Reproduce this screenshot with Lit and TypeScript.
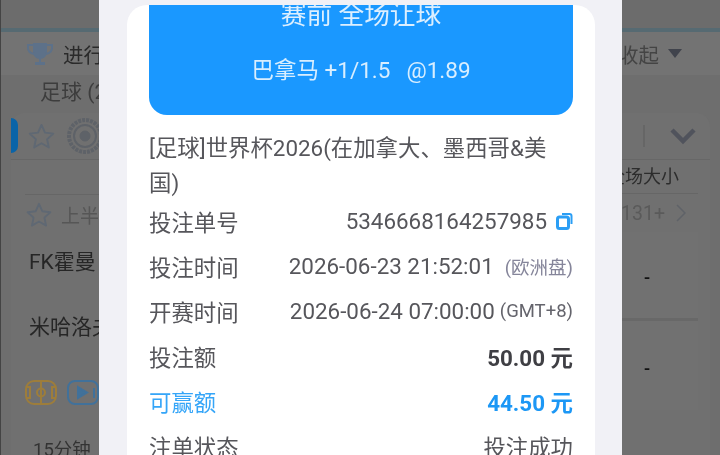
import { LitElement, html, css } from "lit";
import { customElement } from "lit/decorators.js";

const star = html`<svg viewBox="0 0 30 30" fill="none" stroke="#5f6873" stroke-width="2" stroke-linejoin="round">
  <path d="M15 3l3.6 8 8.6 1-6.4 5.8 1.8 8.6L15 22l-7.6 4.4 1.8-8.6L2.8 12l8.6-1z" />
</svg>`;

@customElement("app-root")
export class AppRoot extends LitElement {
  static styles = css`
    :host {
      display: block;
      position: relative;
      width: 720px;
      height: 455px;
      overflow: hidden;
      background: #6e6e6e;
      font-family: Roboto, "Noto Sans CJK SC", sans-serif;
      filter: blur(0.6px);
    }

    /* dimmed page behind the dialog */
    .page {
      height: 455px;
      box-sizing: border-box;
      border-left: 1px solid #444;
      display: flex;
      flex-direction: column;
      color: #222;
    }
    .strip {
      height: 28px;
      background: #6c6c6c;
      flex: none;
    }
    .rule {
      height: 4px;
      background: #566a72;
      flex: none;
    }
    .head {
      height: 43px;
      flex: none;
      background: #737373;
      display: flex;
      align-items: center;
      justify-content: space-between;
      padding: 0 38px 0 25px;
      font-size: 20.5px;
      color: #2a2a2a;
    }
    .head-l,
    .head-r {
      display: flex;
      align-items: center;
      gap: 9px;
    }
    .head-r {
      color: #444;
    }
    .tri {
      width: 0;
      height: 0;
      border-left: 7px solid transparent;
      border-right: 7px solid transparent;
      border-top: 9px solid #40434c;
    }
    .sport {
      height: 38px;
      flex: none;
      padding-left: 39px;
      font-size: 21px;
      line-height: 35px;
      color: #3d3d3d;
    }
    .card {
      flex: 1;
      margin: 0 10px;
      background: #707070;
      border-radius: 14px 14px 0 0;
      display: flex;
      flex-direction: column;
    }
    .card-top {
      height: 46px;
      flex: none;
      display: flex;
      align-items: center;
      border-bottom: 1px solid #676767;
      position: relative;
      justify-content: space-between;
      padding: 0 14px 0 16px;
    }
    .accent {
      position: absolute;
      left: 0;
      top: 5px;
      width: 7px;
      height: 35px;
      background: #0a64a8;
      border-radius: 0 8px 8px 0;
    }
    .card-top-l,
    .card-top-r {
      display: flex;
      align-items: center;
      gap: 10px;
    }
    .card-top-r {
      gap: 25px;
    }
    .sep {
      width: 2px;
      height: 22px;
      background: #666;
    }
    .star {
      width: 29px;
      height: 29px;
      display: block;
      flex: none;
    }
    .chev {
      width: 26px;
      height: 18px;
      display: block;
    }
    .market {
      flex: 1;
      display: flex;
      justify-content: space-between;
      padding: 0 12px 0 14px;
    }
    .teams {
      display: flex;
      flex-direction: column;
      width: 80px;
    }
    .half {
      height: 40px;
      margin-top: 34px;
      flex: none;
      box-sizing: border-box;
      border-top: 1px solid #666;
      display: flex;
      align-items: center;
      gap: 8px;
      font-size: 19px;
      color: #565656;
      white-space: nowrap;
    }
    .half .star {
      width: 28px;
      height: 28px;
    }
    .team {
      height: 65px;
      flex: none;
      box-sizing: border-box;
      padding: 12px 0 0 4px;
      font-size: 21px;
      line-height: 32px;
      white-space: nowrap;
      color: #262626;
    }
    .icons {
      display: flex;
      gap: 10px;
      margin-top: 16px;
      height: 58px;
      flex: none;
    }
    .icons svg {
      display: block;
      width: 32px;
      height: 25px;
    }
    .time {
      font-size: 18.5px;
      padding-left: 8px;
      color: #333;
      line-height: 24px;
      white-space: nowrap;
    }
    .odds {
      width: 102px;
      display: flex;
      flex-direction: column;
    }
    .odds-title {
      height: 33px;
      font-size: 18px;
      line-height: 34px;
      color: #2c2c2c;
      white-space: nowrap;
      text-align: center;
      padding-right: 8px;
    }
    .more {
      height: 38px;
      flex: none;
      border-top: 1px solid #666;
      display: flex;
      align-items: center;
      gap: 11px;
      font-size: 19.5px;
      color: #5a5a5a;
      justify-content: flex-end;
      padding-right: 12px;
    }
    .cell {
      height: 89px;
      flex: none;
      display: flex;
      align-items: center;
      justify-content: center;
      box-sizing: border-box;
      padding-top: 5px;
      background: #717171;
      border-bottom: 3px solid #686868;
      font-size: 18px;
      font-weight: 500;
      color: #111;
    }
    .cell:last-child {
      border-bottom: none;
    }

    /* dialog */
    .modal {
      position: absolute;
      left: 99px;
      top: 0;
      width: 523px;
      height: 455px;
      box-sizing: border-box;
      background: #f1f1f6;
      padding: 5px 27px 0 28px;
    }
    .sheet {
      height: 100%;
      background: #fff;
      border-radius: 20px 20px 0 0;
      padding: 0 22px;
      overflow: hidden;
      color: #56565b;
      font-size: 22.4px;
    }
    .banner {
      height: 110px;
      background: #1a98ff;
      border-radius: 0 0 18px 18px;
      color: #d8eeff;
      text-align: center;
      box-sizing: border-box;
    }
    .banner-title {
      font-size: 25.7px;
      line-height: 20px;
      color: #dcefff;
    }
    .banner-pick {
      font-size: 22.5px;
      line-height: 30px;
      margin-top: 30px;
    }
    .banner-pick span {
      margin-left: 16px;
    }
    .league {
      margin: 16px 0 -3px;
      line-height: 35px;
      padding-right: 16px;
    }
    .row {
      height: 45px;
      display: flex;
      align-items: center;
      justify-content: space-between;
    }
    .val {
      display: flex;
      align-items: center;
    }
    .note {
      font-size: 18.5px;
      color: #85859a;
      margin-left: 11px;
    }
    .note.dark {
      color: #64646c;
      margin-left: 5px;
    }
    .copy {
      width: 17px;
      height: 18px;
      margin-left: 9px;
      display: block;
    }
    .bold {
      font-weight: 700;
      color: #3f3f44;
    }
    .win {
      color: #35a5f8;
    }
    .win .bold {
      color: #1c97f5;
    }
  `;

  render() {
    return html`
      <div class="page">
        <div class="strip"></div>
        <div class="rule"></div>
        <div class="head">
          <div class="head-l">
            <svg width="28" height="28" viewBox="0 0 28 28">
              <path d="M7 3h14v9c0 4-3 7-7 7s-7-3-7-7z" fill="#5d7189" />
              <path d="M7 5H2v3c0 3 2 5 6 6M21 5h5v3c0 3-2 5-6 6" fill="none" stroke="#5d7189" stroke-width="2" />
              <path d="M13 18h2v4h4v3H9v-3h4z" fill="#5d7189" />
            </svg>
            <span>进行中</span>
          </div>
          <div class="head-r"><span>收起</span><i class="tri"></i></div>
        </div>
        <div class="sport">足球 (2)</div>
        <div class="card">
          <div class="card-top">
            <i class="accent"></i>
            <div class="card-top-l">
              <span class="star">${star}</span>
              <svg width="38" height="38" viewBox="0 0 38 38" fill="none" stroke="#5e6268">
                <circle cx="19" cy="19" r="16" stroke-width="4" stroke-dasharray="3 1" />
                <circle cx="19" cy="19" r="11" stroke-width="2" />
                <circle cx="19" cy="19" r="5" fill="#5e6268" />
              </svg>
            </div>
            <div class="card-top-r">
              <i class="sep"></i>
              <svg class="chev" viewBox="0 0 26 18" fill="none" stroke="#50535c" stroke-width="4.5">
                <path d="M2 3l11 11L24 3" />
              </svg>
            </div>
          </div>
          <div class="market">
            <div class="teams">
              <div class="half"><span class="star">${star}</span><span>上半场</span></div>
              <div class="team">FK霍曼</div>
              <div class="team">米哈洛夫</div>
              <div class="icons">
                <svg viewBox="0 0 32 25" fill="none" stroke="#9d7d3b" stroke-width="2">
                  <rect x="1" y="1" width="30" height="23" rx="8" />
                  <path d="M16 1v23M1 7h4v11H1M31 7h-4v11h4" />
                  <circle cx="16" cy="12.5" r="4" />
                </svg>
                <svg viewBox="0 0 32 25" fill="none" stroke="#41719a" stroke-width="2">
                  <rect x="1" y="1" width="30" height="23" rx="7" />
                  <path d="M11 7l9 5.500-9 5.500z" fill="#41719a" />
                  <path d="M27 8v10" />
                </svg>
              </div>
              <div class="time">15分钟</div>
            </div>
            <div class="odds">
              <div class="odds-title">全场大小</div>
              <div class="more">
                <span>131+</span>
                <svg width="10" height="18" viewBox="0 0 10 18" fill="none" stroke="#5f6268" stroke-width="1.5">
                  <path d="M1 1l8 8-8 8" />
                </svg>
              </div>
              <div class="cell">-</div>
              <div class="cell">-</div>
            </div>
          </div>
        </div>
      </div>

      <div class="modal">
        <div class="sheet">
          <div class="banner">
            <div class="banner-title">赛前 全场让球</div>
            <div class="banner-pick">巴拿马 +1/1.5<span>@1.89</span></div>
          </div>
          <div class="league">[足球]世界杯2026(在加拿大、墨西哥&美国)</div>
          <div class="row">
            <span>投注单号</span>
            <span class="val">
              5346668164257985
              <svg class="copy" viewBox="0 0 17 18" fill="none" stroke="#2b9ef5">
                <rect x="1.500" y="5" width="11" height="11.500" rx="2" stroke-width="3" />
                <path d="M6 2h7.500a2 2 0 0 1 2 2v8" stroke-width="2" />
              </svg>
            </span>
          </div>
          <div class="row">
            <span>投注时间</span>
            <span class="val">2026-06-23 21:52:01<span class="note">(欧洲盘)</span></span>
          </div>
          <div class="row">
            <span>开赛时间</span>
            <span class="val">2026-06-24 07:00:00<span class="note dark">(GMT+8)</span></span>
          </div>
          <div class="row">
            <span>投注额</span>
            <span class="val bold">50.00 元</span>
          </div>
          <div class="row win">
            <span>可赢额</span>
            <span class="val bold">44.50 元</span>
          </div>
          <div class="row">
            <span>注单状态</span>
            <span class="val">投注成功</span>
          </div>
        </div>
      </div>
    `;
  }
}

declare global {
  interface HTMLElementTagNameMap {
    "app-root": AppRoot;
  }
}
